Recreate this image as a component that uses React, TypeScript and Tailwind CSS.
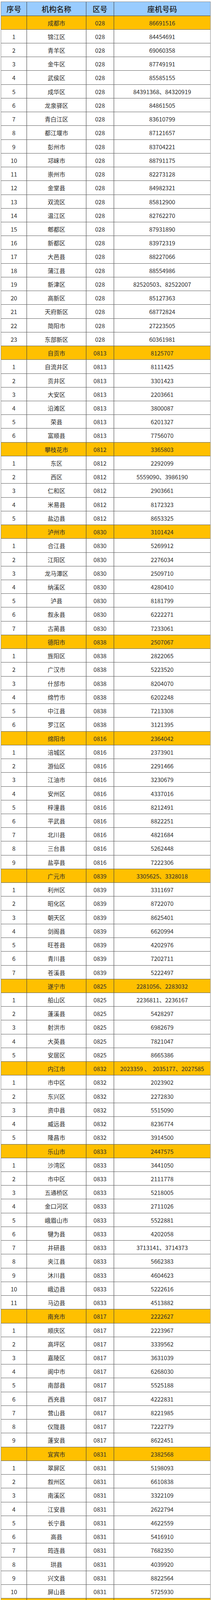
import React from "react";

type Group = { name: string; code: string; phone: string; items: [string, string][] };

const groups: Group[] = [
  { name: "成都市", code: "028", phone: "86691516", items: [
    ["锦江区", "84454691"], ["青羊区", "69060358"], ["金牛区", "87749191"], ["武侯区", "85585155"],
    ["成华区", "84391368、84320919"], ["龙泉驿区", "84861505"], ["青白江区", "83610799"], ["都江堰市", "87121657"],
    ["彭州市", "83704221"], ["邛崃市", "88791175"], ["崇州市", "82273128"], ["金堂县", "84982321"],
    ["双流区", "85812900"], ["温江区", "82762270"], ["郫都区", "87931890"], ["新都区", "83972319"],
    ["大邑县", "88227066"], ["蒲江县", "88554986"], ["新津区", "82520503、82522007"], ["高新区", "85127363"],
    ["天府新区", "68772824"], ["简阳市", "27223505"], ["东部新区", "60361981"],
  ] },
  { name: "自贡市", code: "0813", phone: "8125707", items: [
    ["自流井区", "8111425"], ["贡井区", "3301423"], ["大安区", "2203661"], ["沿滩区", "3800087"],
    ["荣县", "6201327"], ["富顺县", "7756070"],
  ] },
  { name: "攀枝花市", code: "0812", phone: "3365803", items: [
    ["东区", "2292099"], ["西区", "5559090、3986190"], ["仁和区", "2903661"], ["米易县", "8172323"], ["盐边县", "8653325"],
  ] },
  { name: "泸州市", code: "0830", phone: "3101424", items: [
    ["合江县", "5269912"], ["江阳区", "2276034"], ["龙马潭区", "2509710"], ["纳溪区", "4280410"],
    ["泸县", "8181799"], ["叙永县", "6222271"], ["古蔺县", "7233061"],
  ] },
  { name: "德阳市", code: "0838", phone: "2507067", items: [
    ["旌阳区", "2822065"], ["广汉市", "5223520"], ["什邡市", "8204070"], ["绵竹市", "6202248"],
    ["中江县", "7213308"], ["罗江区", "3121395"],
  ] },
  { name: "绵阳市", code: "0816", phone: "2364042", items: [
    ["涪城区", "2373901"], ["游仙区", "2291466"], ["江油市", "3230679"], ["安州区", "4337016"],
    ["梓潼县", "8212491"], ["平武县", "8822251"], ["北川县", "4821684"], ["三台县", "5262448"], ["盐亭县", "7222306"],
  ] },
  { name: "广元市", code: "0839", phone: "3305625、3328018", items: [
    ["利州区", "3311697"], ["昭化区", "8722070"], ["朝天区", "8625401"], ["剑阁县", "6620994"],
    ["旺苍县", "4202976"], ["青川县", "7202711"], ["苍溪县", "5222497"],
  ] },
  { name: "遂宁市", code: "0825", phone: "2281056、2283032", items: [
    ["船山区", "2236811、2236167"], ["蓬溪县", "5428297"], ["射洪市", "6982679"], ["大英县", "7821047"], ["安居区", "8665386"],
  ] },
  { name: "内江市", code: "0832", phone: "2023359 、  2035177、2027585", items: [
    ["市中区", "2023902"], ["东兴区", "2272830"], ["资中县", "5515090"], ["威远县", "8236774"], ["隆昌市", "3914500"],
  ] },
  { name: "乐山市", code: "0833", phone: "2447575", items: [
    ["沙湾区", "3441050"], ["市中区", "2111778"], ["五通桥区", "5218005"], ["金口河区", "2711026"],
    ["峨眉山市", "5522881"], ["犍为县", "4202058"], ["井研县", "3713141、3714373"], ["夹江县", "5662383"],
    ["沐川县", "4604623"], ["峨边县", "5222616"], ["马边县", "4513882"],
  ] },
  { name: "南充市", code: "0817", phone: "2222627", items: [
    ["顺庆区", "2223967"], ["高坪区", "3339562"], ["嘉陵区", "3631039"], ["阆中市", "6268030"],
    ["南部县", "5525188"], ["西充县", "4222831"], ["营山县", "8221985"], ["仪陇县", "7222779"], ["蓬安县", "8622451"],
  ] },
  { name: "宜宾市", code: "0831", phone: "2382568", items: [
    ["翠屏区", "5198093"], ["叙州区", "6610838"], ["南溪区", "3322109"], ["江安县", "2622794"],
    ["长宁县", "4622559"], ["高县", "5416910"], ["筠连县", "7682350"], ["珙县", "4039920"],
    ["兴文县", "8822564"], ["屏山县", "5725930"],
  ] },
  { name: "广安市", code: "0826", phone: "2337750", items: [
    ["广安区", "2241813"], ["华蓥市", "8394203"], ["岳池县", "5222703"], ["武胜县", "6227670、6220280"],
    ["邻水县", "3378786、3366349"], ["前锋区", "2860170"],
  ] },
  { name: "达州市", code: "0818", phone: "3091695", items: [
    ["通川区", "2157768"], ["万源市", "8622162"], ["达川区", "2190985"], ["宣汉县", "5203491"],
    ["开江县", "8222783"], ["大竹县", "6245966"], ["渠县", "7322357"],
  ] },
  { name: "巴中市", code: "0827", phone: "5266210", items: [
    ["巴州区", "5281227"], ["平昌县", "6222249"], ["通江县", "7230166"], ["南江县", "8222365"], ["恩阳区", "3368733"],
  ] },
  { name: "雅安市", code: "0835", phone: "2222793", items: [
    ["雨城区", "2222936"], ["名山区", "3222397"], ["荥经县", "7622754"], ["汉源县", "4222417"],
    ["石棉县", "8862091"], ["天全县", "7222297"], ["芦山县", "6523706"], ["宝兴县", "6822089"],
  ] },
  { name: "眉山市", code: "028", phone: "38195165", items: [
    ["东坡区", "38297902"], ["仁寿县", "36201408"], ["彭山区", "37621792"], ["洪雅县", "37403257"],
    ["丹棱县", "37202463"], ["青神县", "38811388"],
  ] },
  { name: "资阳市", code: "028", phone: "26631539", items: [
    ["雁江区", "26219466"], ["安岳县", "24501342"], ["乐至县", "23324225"],
  ] },
  { name: "阿坝州", code: "0837", phone: "2822352", items: [
    ["汶川县", "6222730"], ["理县", "6824137"], ["茂县", "7422355"], ["松潘县", "7232649"],
    ["九寨沟县", "7730766"], ["金川县", "2522128"], ["小金县", "2783186"], ["黑水县", "6721804"],
    ["马尔康市", "2823705"], ["壤塘县", "2378229"], ["阿坝县", "2483594"], ["若尔盖县", "2291926"], ["红原县", "2662053"],
  ] },
  { name: "甘孜州", code: "0836", phone: "2827775", items: [
    ["康定市", "2831077"], ["泸定县", "3122131"], ["丹巴县", "3523261"], ["九龙县", "3323638"],
    ["雅江县", "5125061"], ["道孚县", "7121402"], ["炉霍县", "7321152"], ["甘孜县", "7521558"], ["巴塘县", "5623091"],
  ] },
  { name: "凉山州", code: "0834", phone: "6992912", items: [
    ["西昌市", "3300143"], ["木里县", "6525897"], ["盐源县", "6365085"], ["德昌县", "5282338"],
    ["会理市", "5622183"], ["会东县", "5422238"], ["宁南县", "4572535"], ["普格县", "4772818"],
    ["布拖县", "8531350"], ["金阳县", "8739623"], ["昭觉县", "8332946"], ["喜德县", "7442376"],
    ["冕宁县", "6722129"], ["越西县", "8657986"], ["甘洛县", "7812558"], ["美姑县", "8242215"], ["雷波县", "8822240"],
  ] },
];

type RowData = { idx: string; name: string; code: string; phone: string; highlight: boolean };

const rows: RowData[] = [];
groups.forEach((g) => {
  rows.push({ idx: "", name: g.name, code: g.code, phone: g.phone, highlight: true });
  g.items.forEach(([n, p], i) => rows.push({ idx: String(i + 1), name: n, code: g.code, phone: p, highlight: false }));
});

function Row({ r, tall }: { r: RowData; tall: boolean }) {
  const base = "flex border-b border-[#5a5a5a] text-[15px] leading-none text-[#2b2b2b] ";
  const height = tall ? "h-[36px] " : "h-[35px] ";
  const bg = r.highlight ? "bg-[#ffc000]" : "bg-white";
  return (
    <div className={base + height + bg}>
      <div className="flex w-[66px] shrink-0 items-center justify-center border-r border-[#3a3a3a]">{r.idx}</div>
      <div className="flex w-[152px] shrink-0 items-center justify-center border-r border-[#3a3a3a]">{r.name}</div>
      <div className="flex w-[71px] shrink-0 items-center justify-center border-r border-[#3a3a3a]">{r.code}</div>
      <div className="flex flex-1 items-center justify-center whitespace-pre">{r.phone}</div>
    </div>
  );
}

export default function App() {
  const frac = 0.2323;
  return (
    <div className="bg-white pt-[4px] font-['Noto_Sans_CJK_SC',sans-serif]">
      <div className="ml-[2px] w-[537px] border-l border-r border-t border-[#8a8a8a]">
        <div className="flex h-[36px] border-b border-[#3a3a3a] bg-[#99ccff] text-[19px] font-medium leading-none text-[#222]">
          <div className="flex w-[66px] shrink-0 items-center justify-center border-r border-[#3a3a3a]">序号</div>
          <div className="flex w-[152px] shrink-0 items-center justify-center border-r border-[#3a3a3a]">机构名称</div>
          <div className="flex w-[71px] shrink-0 items-center justify-center border-r border-[#3a3a3a]">区号</div>
          <div className="flex flex-1 items-center justify-center">座机号码</div>
        </div>
        {rows.map((r, i) => (
          <Row key={i} r={r} tall={Math.floor((i + 1) * frac) > Math.floor(i * frac)} />
        ))}
      </div>
    </div>
  );
}
